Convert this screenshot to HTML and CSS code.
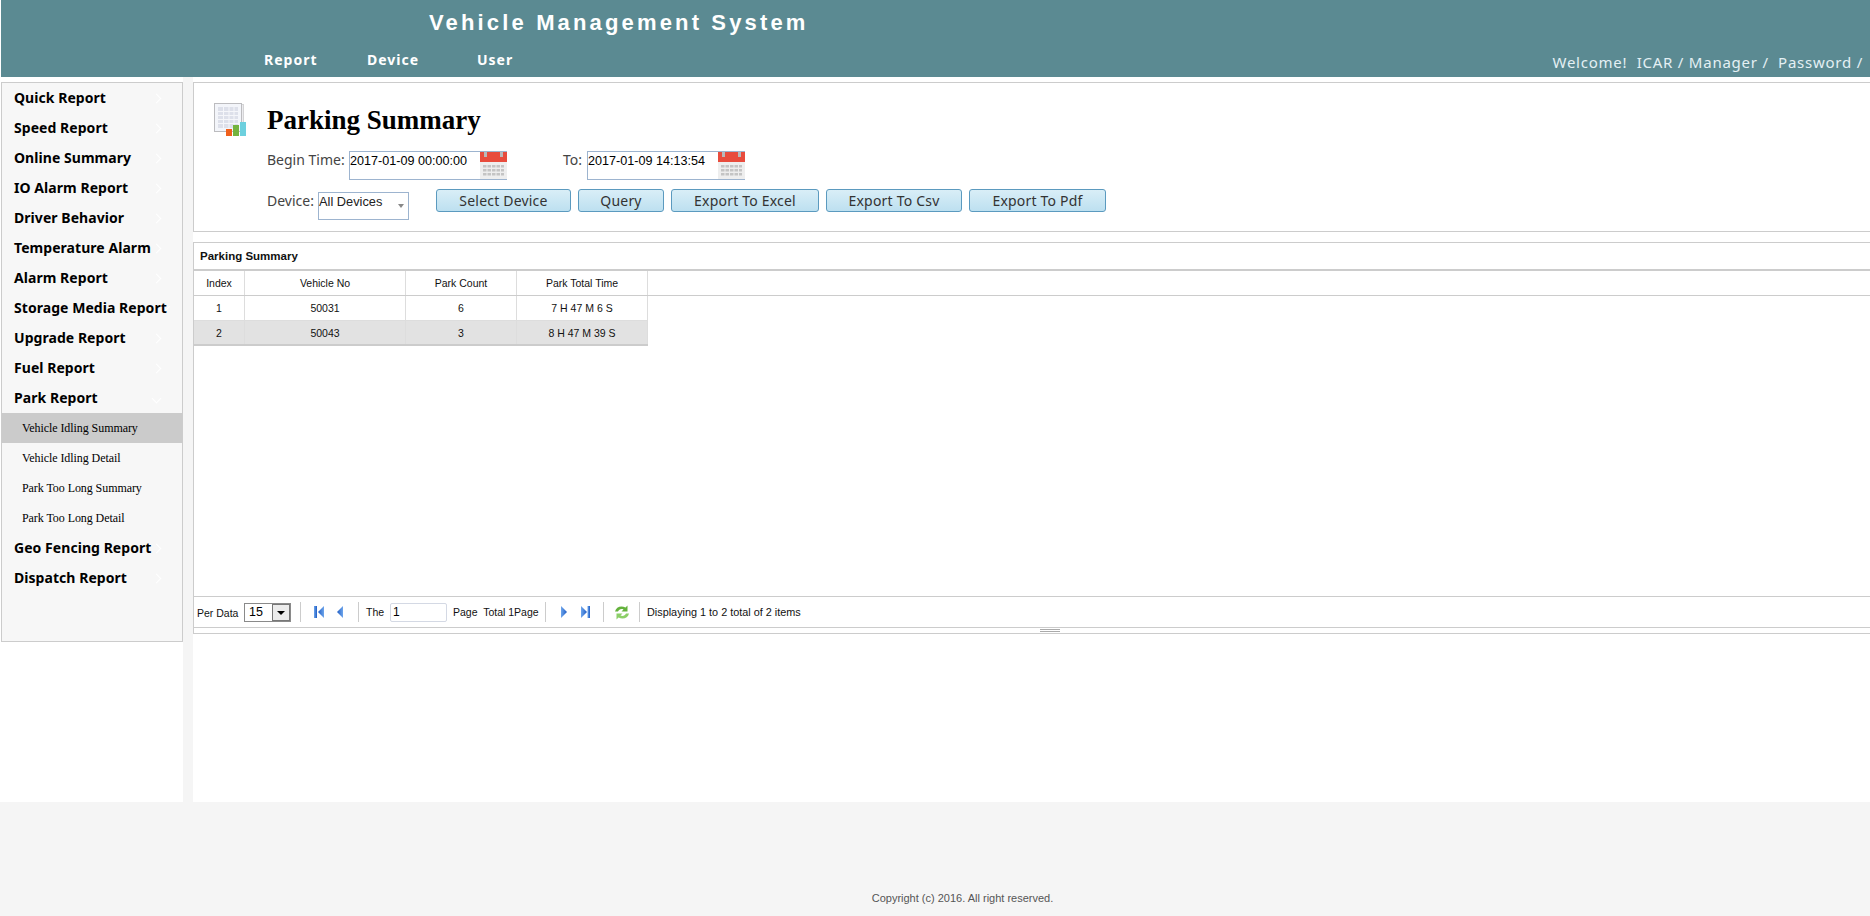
FILE: index.html
```html
<!DOCTYPE html>
<html lang="en">

<head>
    <meta charset="UTF-8">
    <title>Vehicle Management System</title>
    <link rel="stylesheet" href="styles.css">
</head>

<body>
    <div class="header">
        <div class="site-title">Vehicle Management System</div>
        <div class="header-bottom">
            <div class="top-nav">
                <a class="nav-report">Report</a>
                <a class="nav-device">Device</a>
                <a class="nav-user">User</a>
            </div>
            <div class="welcome">Welcome!&nbsp; ICAR / Manager /&nbsp; Password /</div>
        </div>
    </div>

    <div class="content">
        <!-- left menu -->
        <div class="side-col">
            <div class="sidebar">
                <div class="menu-item">Quick Report</div>
                <div class="menu-item">Speed Report</div>
                <div class="menu-item">Online Summary</div>
                <div class="menu-item">IO Alarm Report</div>
                <div class="menu-item">Driver Behavior</div>
                <div class="menu-item">Temperature Alarm</div>
                <div class="menu-item">Alarm Report</div>
                <div class="menu-item">Storage Media Report</div>
                <div class="menu-item">Upgrade Report</div>
                <div class="menu-item">Fuel Report</div>
                <div class="menu-item open">Park Report</div>
                <div class="sub-item active">Vehicle Idling Summary</div>
                <div class="sub-item">Vehicle Idling Detail</div>
                <div class="sub-item">Park Too Long Summary</div>
                <div class="sub-item">Park Too Long Detail</div>
                <div class="menu-item">Geo Fencing Report</div>
                <div class="menu-item">Dispatch Report</div>
            </div>
        </div>

        <div class="main">
            <!-- query form -->
            <div class="query-panel">
                <div class="title-row">
                    <svg class="report-icon" width="33" height="33" viewBox="0 0 33 33">
                        <rect x="3.500" y="1.500" width="26" height="27" fill="#ececef" stroke="#d4d4d6"/>
                        <rect x="0.500" y="0.500" width="27" height="28" fill="#f3f5fa" stroke="#bcbcbf"/>
                        <rect x="4" y="4" width="20" height="21" fill="#dde0ea"/>
                        <path d="M4 8.500h20M4 12.500h20M4 16.500h20M4 20.500h20M9.500 4v21M15 4v21M20 4v21" stroke="#f5f6fa"/>
                        <rect x="12" y="26" width="6" height="7" fill="#f0601c"/>
                        <rect x="19" y="22" width="6" height="11" fill="#74b33e"/>
                        <rect x="26" y="19" width="6" height="14" fill="#6dd0de"/>
                    </svg>
                    <h2 class="page-title">Parking Summary</h2>
                </div>
                <div class="form-row time-row">
                    <label class="begin-label">Begin Time:</label>
                    <div class="date-box">
                        <input class="date-input" value="2017-01-09 00:00:00">
                        <svg width="27" height="27" viewBox="0 0 27 27">
                            <rect width="27" height="27" fill="#eeeeee"/>
                            <rect width="27" height="10" fill="#e84c3d"/>
                            <rect x="4" y="0" width="3" height="5" fill="#b9b9b9"/>
                            <rect x="20" y="0" width="3" height="5" fill="#b9b9b9"/>
                            <path d="M3 13h21v2.500h-21zM3 17h21v2.500h-21zM3 21h21v2.500h-21z" fill="#c4c4c4"/>
                            <path d="M7 12v12M11.500 12v12M16 12v12M20.500 12v12" stroke="#eeeeee"/>
                        </svg>
                    </div>
                    <label class="to-label">To:</label>
                    <div class="date-box">
                        <input class="date-input" value="2017-01-09 14:13:54">
                        <svg width="27" height="27" viewBox="0 0 27 27">
                            <rect width="27" height="27" fill="#eeeeee"/>
                            <rect width="27" height="10" fill="#e84c3d"/>
                            <rect x="4" y="0" width="3" height="5" fill="#b9b9b9"/>
                            <rect x="20" y="0" width="3" height="5" fill="#b9b9b9"/>
                            <path d="M3 13h21v2.500h-21zM3 17h21v2.500h-21zM3 21h21v2.500h-21z" fill="#c4c4c4"/>
                            <path d="M7 12v12M11.500 12v12M16 12v12M20.500 12v12" stroke="#eeeeee"/>
                        </svg>
                    </div>
                </div>
                <div class="form-row device-row">
                    <label class="device-label">Device:</label>
                    <div class="device-select">All Devices<span class="select-arrow"></span></div>
                    <button class="btn btn-select">Select Device</button>
                    <button class="btn btn-query">Query</button>
                    <button class="btn btn-excel">Export To Excel</button>
                    <button class="btn btn-csv">Export To Csv</button>
                    <button class="btn btn-pdf">Export To Pdf</button>
                </div>
            </div>

            <!-- grid -->
            <div class="grid-panel">
                <div class="grid-title">Parking Summary</div>
                <div class="grid-body">
                    <div class="grid-row grid-head">
                        <div class="cell c-index">Index</div>
                        <div class="cell c-vehicle">Vehicle No</div>
                        <div class="cell c-count">Park Count</div>
                        <div class="cell c-time">Park Total Time</div>
                    </div>
                    <div class="grid-row">
                        <div class="cell c-index">1</div>
                        <div class="cell c-vehicle">50031</div>
                        <div class="cell c-count">6</div>
                        <div class="cell c-time">7 H 47 M 6 S</div>
                    </div>
                    <div class="grid-row row-alt">
                        <div class="cell c-index">2</div>
                        <div class="cell c-vehicle">50043</div>
                        <div class="cell c-count">3</div>
                        <div class="cell c-time">8 H 47 M 39 S</div>
                    </div>
                </div>
                <div class="pager">
                    <svg width="0" height="0" class="defs">
                        <defs>
                            <linearGradient id="pgleft" x1="0" x2="1" y1="0" y2="0">
                                <stop offset="0" stop-color="#1f5cc4"/>
                                <stop offset="1" stop-color="#6ea6ec"/>
                            </linearGradient>
                            <linearGradient id="pgright" x1="0" x2="1" y1="0" y2="0">
                                <stop offset="0" stop-color="#6ea6ec"/>
                                <stop offset="1" stop-color="#1f5cc4"/>
                            </linearGradient>
                        </defs>
                    </svg>
                    <span class="per-data">Per Data</span>
                    <div class="page-size">15<span class="size-btn"></span></div>
                    <span class="sep sep-1"></span>
                    <svg class="pg-first" width="10" height="12" viewBox="0 0 10 12"><rect width="3" height="12" fill="url(#pgright)"/><path d="M10 0v12L4 6z" fill="url(#pgleft)"/></svg>
                    <svg class="pg-prev" width="6" height="12" viewBox="0 0 6 12"><path d="M6 0v12L0 6z" fill="url(#pgleft)"/></svg>
                    <span class="sep sep-2"></span>
                    <span class="the">The</span>
                    <input class="page-input" value="1">
                    <span class="page-text">Page&nbsp; Total 1Page</span>
                    <span class="sep"></span>
                    <svg class="pg-next" width="6" height="12" viewBox="0 0 6 12"><path d="M0 0v12L6 6z" fill="url(#pgright)"/></svg>
                    <svg class="pg-last" width="9" height="12" viewBox="0 0 9 12"><path d="M0 0v12L6 6z" fill="url(#pgright)"/><rect x="6.500" width="2.500" height="12" fill="url(#pgright)"/></svg>
                    <span class="sep sep-4"></span>
                    <svg class="refresh" width="16" height="15" viewBox="0 0 16 15">
                        <path d="M1 6.500C2 2 7 0 11.500 2.500L13.500 0.500V6.500H7.500L9.500 4.500C7 3.500 5 4.500 4 6.500z" fill="#64b23c"/>
                        <path d="M15 8.500C14 13 9 15 4.500 12.500L2.500 14.500V8.500H8.500L6.500 10.500C9 11.500 11 10.500 12 8.500z" fill="#8ccf68"/>
                    </svg>
                    <span class="sep sep-5"></span>
                    <span class="display-msg">Displaying 1 to 2 total of 2 items</span>
                </div>
                <div class="split-bar"><span class="split-handle"></span></div>
            </div>
        </div>
    </div>

    <div class="footer">Copyright (c) 2016. All right reserved.</div>
</body>

</html>
```

FILE: styles.css
```css
body {
    margin: 0;
    background-color: #fff;
    width: 1870px;
}

/* header */
.header {
    margin-left: 1px;
    height: 77px;
    background-color: #5b8a92;
    color: #fff;
    font-family: "Liberation Sans", sans-serif;
}
.site-title {
    padding: 9px 0 0 428px;
    font-size: 22px;
    line-height: 28px;
    font-weight: bold;
    letter-spacing: 3.15px;
    white-space: nowrap;
}
.header-bottom {
    display: flex;
    justify-content: space-between;
    margin-top: 14px;
}
.top-nav {
    display: flex;
    padding-left: 263px;
    font-family: "Noto Sans", sans-serif;
    font-size: 14px;
    line-height: 18px;
    font-weight: bold;
    letter-spacing: 1px;
}
.nav-report {
    width: 103px;
}
.nav-device {
    width: 110px;
}
.welcome {
    padding: 1px 7px 0 0;
    font-family: "Noto Sans", sans-serif;
    font-size: 15px;
    line-height: 20px;
    letter-spacing: 0.76px;
    color: #e4f0f4;
}

.content {
    display: flex;
    height: 725px;
}

/* left menu */
.side-col {
    width: 183px;
    padding: 5px 0 0 1px;
    box-sizing: border-box;
}
.sidebar {
    height: 560px;
    box-sizing: border-box;
    border: 1px solid #ccc;
    background-color: #f7f7f7;
}
.menu-item {
    display: flex;
    justify-content: space-between;
    align-items: center;
    height: 30px;
    line-height: 30px;
    padding: 0 22px 0 12px;
    font-family: "Noto Sans", sans-serif;
    font-size: 14px;
    font-weight: bold;
    letter-spacing: 0.05px;
    color: #000;
    white-space: nowrap;
}
/* faint arrow on the right of each menu group */
.menu-item::after {
    content: "";
    width: 6px;
    height: 6px;
    border-top: 1px solid #fff;
    border-right: 1px solid #fff;
    transform: rotate(45deg);
}
.menu-item.open::after {
    transform: rotate(135deg);
}
.sub-item {
    height: 30px;
    line-height: 30px;
    padding-left: 20px;
    font-family: "Liberation Serif", serif;
    font-size: 12px;
    letter-spacing: -0.07px;
    color: #000;
}
.sub-item.active {
    background-color: #cbcbcb;
}

/* main */
.main {
    flex: 1;
    border-left: 10px solid #f5f5f5;
    padding-top: 5px;
    min-width: 0;
}
.query-panel {
    height: 150px;
    box-sizing: border-box;
    border: 1px solid #ccc;
    border-right: 0;
    background-color: #fff;
}
.title-row {
    display: flex;
    align-items: center;
    height: 68px;
    padding-left: 20px;
}
.report-icon {
    margin-top: 5px;
}
.page-title {
    margin: 6px 0 0 20px;
    font-family: "Liberation Serif", serif;
    font-size: 27px;
    font-weight: bold;
    color: #000;
}
.form-row {
    display: flex;
    font-family: "Noto Sans", sans-serif;
    font-size: 14px;
    color: #444;
}
.time-row {
    align-items: flex-start;
    padding-left: 73px;
}
.begin-label {
    width: 82px;
    line-height: 18px;
}
.to-label {
    width: 24px;
    margin-left: 56px;
    line-height: 18px;
}
.date-box {
    display: flex;
    width: 157px;
    height: 27px;
    border: 1px solid #9db4cf;
    border-width: 1px 0 1px 1px;
    box-shadow: inset -1px 0 0 #9db4cf;
}
.date-input {
    flex: 1;
    min-width: 0;
    border: 0;
    padding: 0;
    height: 18px;
    font-family: "Liberation Sans", sans-serif;
    font-size: 12.6px;
    color: #000;
    outline: none;
    background: transparent;
}
.device-row {
    align-items: flex-start;
    padding: 9px 0 0 73px;
}
.device-label {
    width: 51px;
    line-height: 23px;
}
.device-select {
    width: 89px;
    height: 26px;
    border: 1px solid #9db4cf;
    margin-top: 3px;
    font-family: "Liberation Sans", sans-serif;
    font-size: 12.8px;
    line-height: 17px;
    color: #222;
    display: flex;
    justify-content: space-between;
}
.select-arrow {
    width: 0;
    height: 0;
    margin: 11px 4px 0 0;
    border-left: 3.500px solid transparent;
    border-right: 3.500px solid transparent;
    border-top: 4px solid #888;
}
.btn {
    height: 23px;
    padding: 0;
    border: 1px solid #5b9abf;
    border-radius: 3px;
    background: linear-gradient(#d9eef7, #bde0f0);
    font-family: "Noto Sans", sans-serif;
    font-size: 14px;
    line-height: 19px;
    letter-spacing: 0.2px;
    color: #333;
}
.btn-select {
    width: 135px;
    margin-left: 27px;
}
.btn-query {
    width: 86px;
    margin-left: 7px;
}
.btn-excel {
    width: 148px;
    margin-left: 7px;
}
.btn-csv {
    width: 136px;
    margin-left: 7px;
}
.btn-pdf {
    width: 137px;
    margin-left: 7px;
}

/* grid */
.grid-panel {
    margin-top: 10px;
    height: 392px;
    box-sizing: border-box;
    border-top: 1px solid #ccc;
    border-left: 1px solid #ccc;
    font-family: "Liberation Sans", sans-serif;
    display: flex;
    flex-direction: column;
}
.grid-title {
    height: 26px;
    line-height: 26px;
    padding-left: 6px;
    font-size: 11.5px;
    font-weight: bold;
    color: #111;
    border-bottom: 2px solid #ccc;
}
.grid-body {
    flex: 1;
}
.grid-row {
    display: flex;
    width: 454px;
    height: 24px;
    font-size: 10.500px;
    line-height: 24px;
    color: #111;
    border-bottom: 1px solid #ddd;
}
.grid-head {
    width: 100%;
    border-bottom: 1px solid #ccc;
}
.row-alt {
    background-color: #e2e2e2;
    border-bottom: 2px solid #ccc;
    height: 23px;
}
.cell {
    box-sizing: border-box;
    text-align: center;
    border-right: 1px solid #ddd;
}
.c-index {
    width: 51px;
}
.c-vehicle {
    width: 161px;
}
.c-count {
    width: 111px;
}
.c-time {
    width: 131px;
}

/* pager */
.pager {
    display: flex;
    align-items: center;
    height: 30px;
    border-top: 1px solid #ccc;
    border-bottom: 1px solid #ccc;
    font-size: 10.500px;
    color: #111;
    white-space: nowrap;
}
.defs {
    position: absolute;
}
.per-data {
    margin-left: 3px;
    width: 47px;
    padding-top: 2px;
}
.page-size {
    display: flex;
    justify-content: space-between;
    width: 41px;
    height: 17px;
    padding-left: 4px;
    border: 1px solid #8a8a8a;
    font-size: 12.500px;
    line-height: 17px;
    color: #000;
}
.size-btn {
    position: relative;
    width: 16px;
    height: 15px;
    background-color: #ececec;
    border: 1px solid #777;
}
.size-btn::after {
    content: "";
    position: absolute;
    left: 4px;
    top: 6px;
    border-left: 4px solid transparent;
    border-right: 4px solid transparent;
    border-top: 4px solid #000;
}
.sep {
    width: 1px;
    height: 20px;
    background-color: #ccc;
}
.sep-1 {
    margin: 0 13px 0 9px;
}
.pg-prev {
    margin: 0 15px 0 13px;
}
.sep-2 {
    margin-right: 7px;
}
.the {
    width: 24px;
}
.page-input {
    width: 53px;
    height: 17px;
    padding: 0 0 0 2px;
    border: 1px solid #d4d9e4;
    border-radius: 2px;
    font-size: 12px;
    font-family: "Liberation Sans", sans-serif;
    color: #000;
}
.page-text {
    margin-left: 6px;
    width: 92px;
}
.pg-next {
    margin-left: 15px;
}
.pg-last {
    margin-left: 14px;
}
.sep-4 {
    margin: 0 10px 0 13px;
}
.sep-5 {
    margin: 0 7px 0 9px;
}
.display-msg {
    font-size: 10.85px;
}
.split-bar {
    height: 5px;
    border-bottom: 1px solid #ccc;
    display: flex;
    justify-content: center;
    padding-left: 36px;
}
.split-handle {
    width: 20px;
    height: 1px;
    margin-top: 1px;
    border-top: 1px solid #aaa;
    border-bottom: 1px solid #aaa;
}

/* footer */
.footer {
    height: 114px;
    box-sizing: border-box;
    padding: 90px 0 0 55px;
    background-color: #f5f5f5;
    text-align: center;
    font-family: "Liberation Sans", sans-serif;
    font-size: 11px;
    color: #555;
}
```
